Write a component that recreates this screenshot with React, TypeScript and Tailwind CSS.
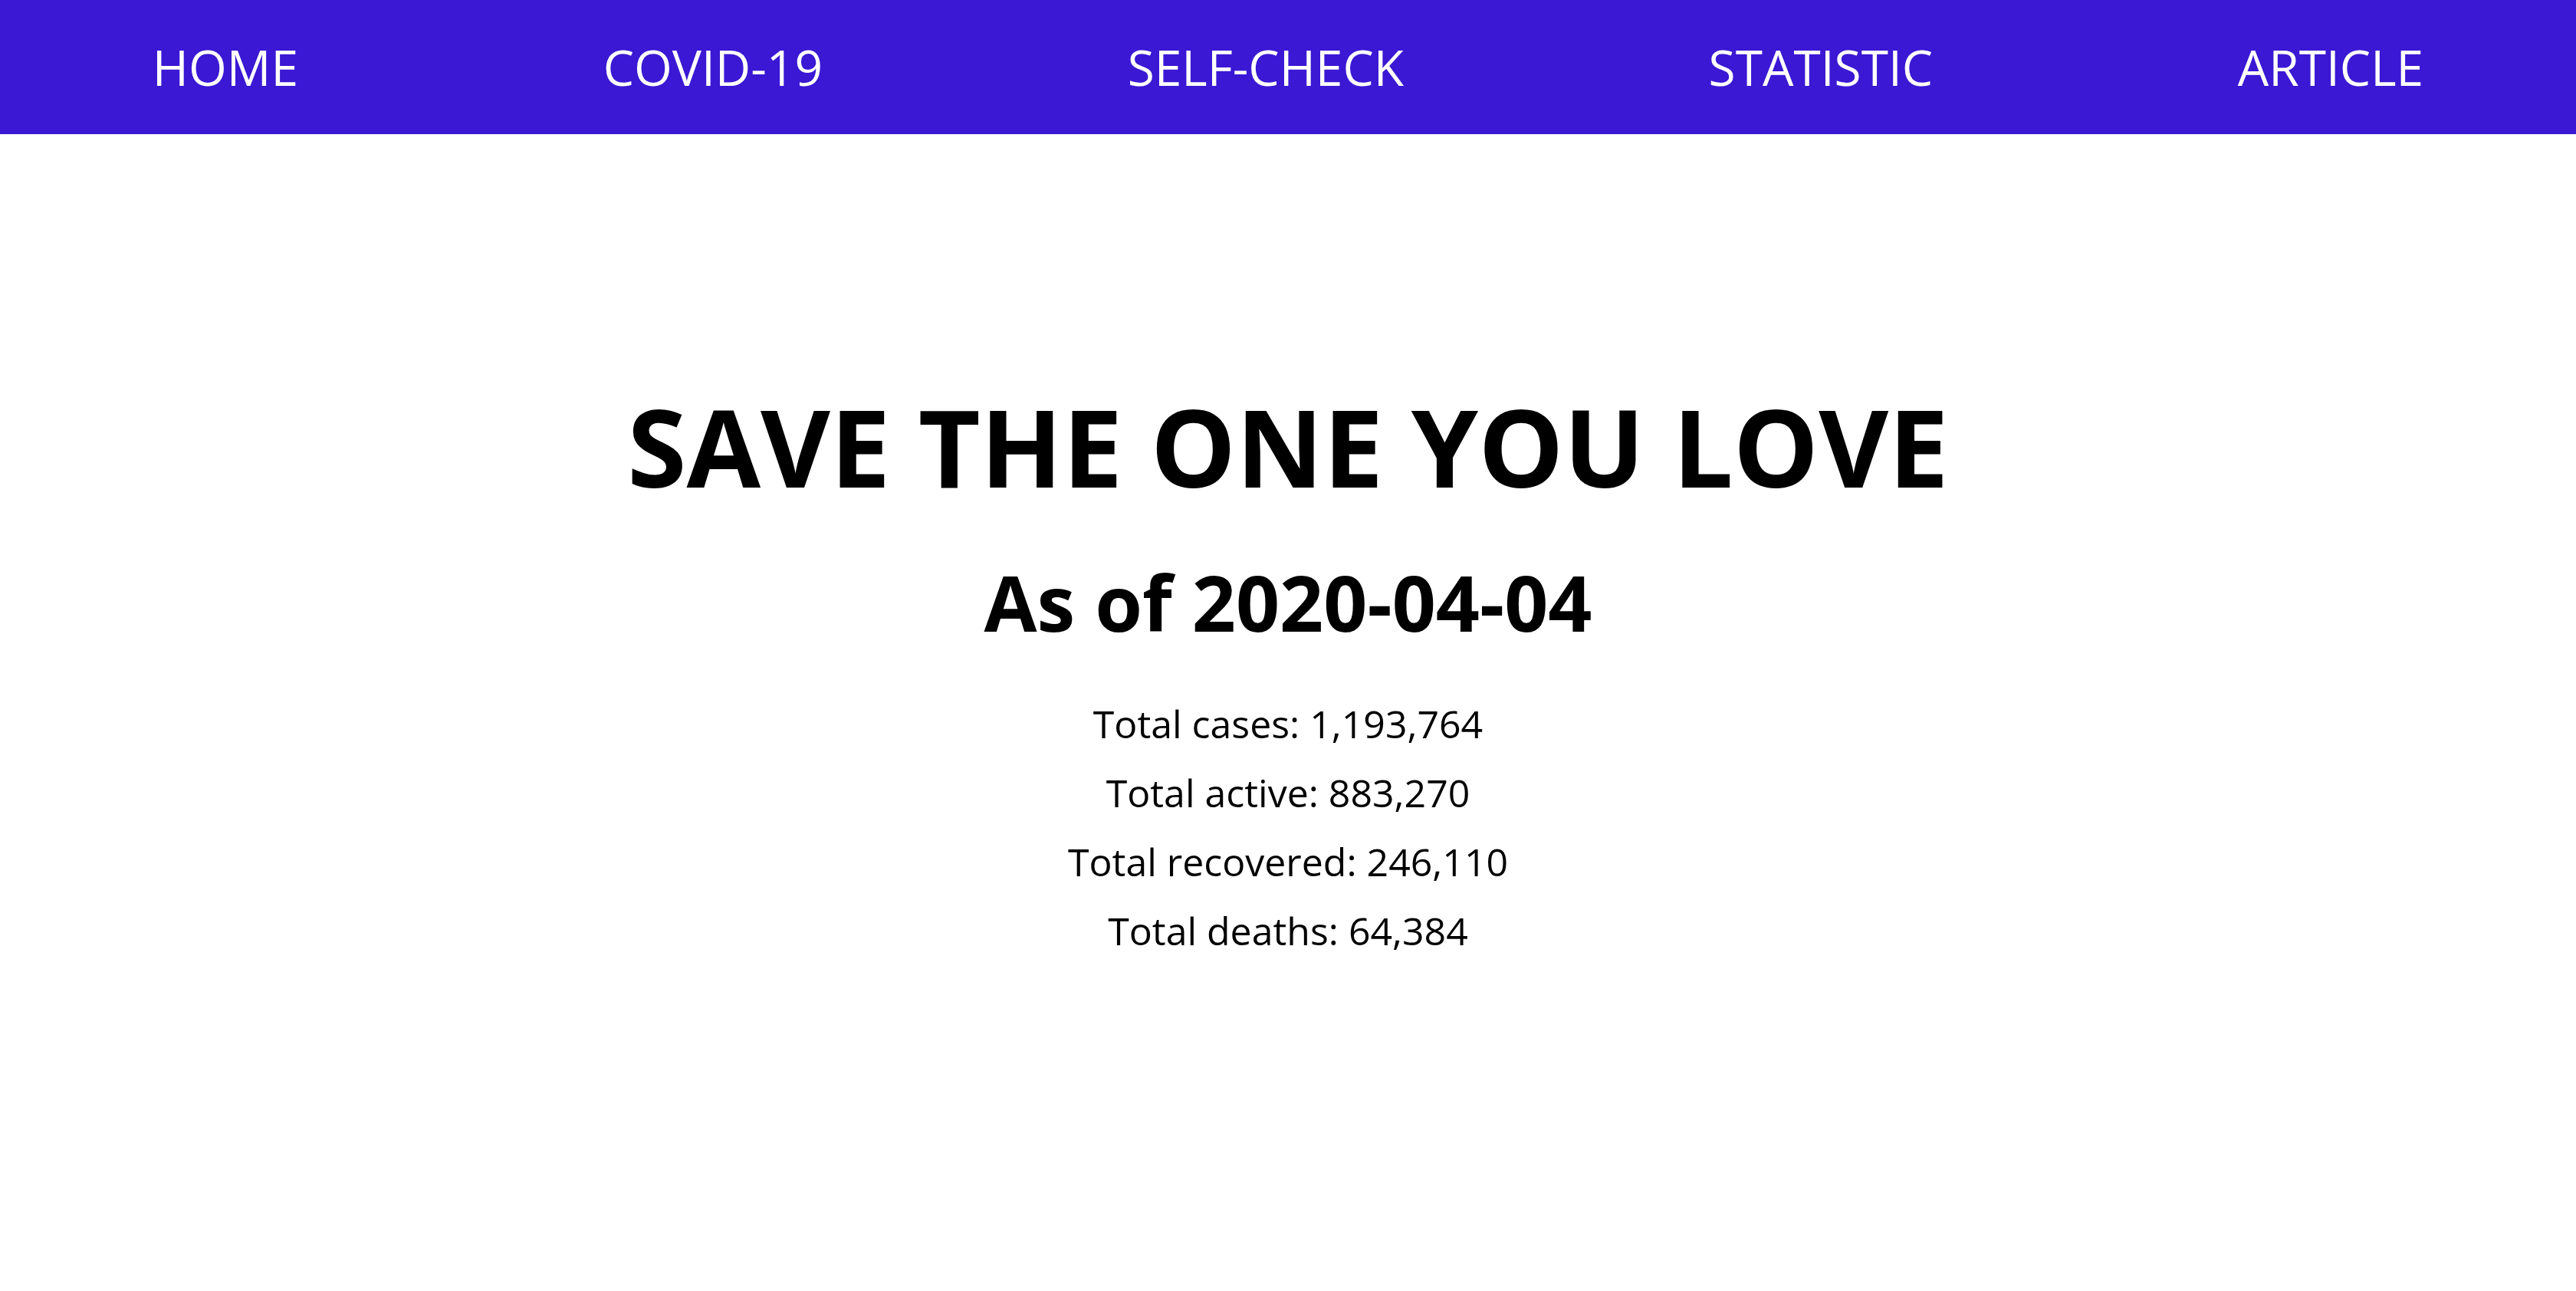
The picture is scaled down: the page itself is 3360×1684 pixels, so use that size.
import React from "react";

const navItems = ["HOME", "COVID-19", "SELF-CHECK", "STATISTIC", "ARTICLE"];
const stats = [
  "Total cases: 1,193,764",
  "Total active: 883,270",
  "Total recovered: 246,110",
  "Total deaths: 64,384",
];

export default function App() {
  return (
    <div className="min-h-screen bg-white font-['Open_Sans',sans-serif] text-black">
      <nav className="flex h-[175px] items-center justify-around bg-[#3a18d4]">
        {navItems.map((item) => (
          <a key={item} href="#" className="text-[64px] font-normal text-white leading-normal">
            {item}
          </a>
        ))}
      </nav>
      <main className="flex flex-col items-center pt-[302px] text-center">
        <h1 className="text-[140px] font-bold leading-normal">SAVE THE ONE YOU LOVE</h1>
        <h2 className="mt-[23px] text-[100px] font-bold leading-normal">As of 2020-04-04</h2>
        <div className="mt-[39px] flex flex-col items-center">
          {stats.map((s) => (
            <p key={s} className="text-[50px] leading-[90px]">
              {s}
            </p>
          ))}
        </div>
      </main>
    </div>
  );
}
